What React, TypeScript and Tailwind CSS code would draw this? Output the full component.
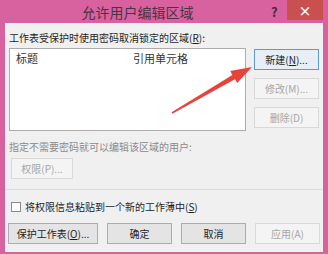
import React from 'react';

const font = "font-['Noto_Sans_CJK_SC',sans-serif]";

function Btn({ children, disabled, focused, className = '' }: { children: React.ReactNode; disabled?: boolean; focused?: boolean; className?: string }) {
  const look = disabled
    ? 'border-[#d9d9d9] bg-[#f4f4f4] text-[#a6a6a6]'
    : focused
      ? 'border-[#5b9bd5] bg-[#e8eef5] text-[#1e1e1e]'
      : 'border-[#adadad] bg-[#e4e4e4] text-[#1e1e1e]';
  return (
    <div className={`flex h-[21px] items-center justify-center border text-[10px] leading-none ${look} ${className}`}>
      {children}
    </div>
  );
}

export default function App() {
  return (
    <div className={`relative flex h-[254px] w-[328px] flex-col overflow-hidden bg-[#d8619f] ${font}`}>
      {/* Title bar */}
      <div className="relative flex h-[23px] shrink-0 items-center">
        <div className="flex-1 pl-[4px] text-center text-[14px] leading-none text-[#4a3443]">允许用户编辑区域</div>
        <div className="w-[12px] text-[13px] font-bold leading-none text-[#4a2a44]">?</div>
        <div className="ml-[4px] mr-[5px] flex h-[20px] w-[36px] items-center justify-center self-start bg-[#c9504f] text-[13px] font-bold leading-none text-white">
          ×
        </div>
      </div>

      {/* Client area */}
      <div className="mb-[2px] ml-[5px] mr-[5px] flex flex-1 flex-col bg-[#f0f0f0] text-[10px] leading-none text-[#1e1e1e]">
        <div className="ml-[4px] mt-[10px] h-[12px]">
          工作表受保护时使用密码取消锁定的区域(<span className="underline">R</span>):
        </div>

        <div className="mt-[3px] flex">
          <div className="ml-[4px] h-[83px] w-[237px] border border-[#acacac] bg-white">
            <div className="flex h-[18px] items-center">
              <span className="ml-[6px] w-[117px] text-[11px] text-[#333]">标题</span>
              <span className="text-[11px] text-[#333]">引用单元格</span>
            </div>
          </div>
          <div className="ml-[8px] flex w-[65px] flex-col gap-[8px]">
            <Btn focused className="mt-[1px]">
              新建(<span className="underline">N</span>)...
            </Btn>
            <Btn disabled>修改(M)...</Btn>
            <Btn disabled>删除(D)</Btn>
          </div>
        </div>

        <div className="ml-[4px] mt-[11px] text-[#8a8a8a]">指定不需要密码就可以编辑该区域的用户:</div>
        <Btn disabled className="ml-[6px] mt-[6px] w-[62px]">
          权限(P)...
        </Btn>

        <div className="mt-[10px] h-[2px] border-t border-[#dcdcdc] border-b-white" />

        <div className="ml-[6px] mt-[11px] flex items-center">
          <div className="h-[10px] w-[10px] border border-[#8a8a8a] bg-white" />
          <span className="ml-[4px]">
            将权限信息粘贴到一个新的工作薄中(<span className="underline">S</span>)
          </span>
        </div>

        <div className="ml-[3px] mt-[11px] flex gap-[9px]">
          <Btn className="w-[90px]">
            保护工作表(<span className="underline">O</span>)...
          </Btn>
          <Btn className="w-[65px]">确定</Btn>
          <Btn className="w-[65px]">取消</Btn>
          <Btn disabled className="w-[65px]">
            应用(A)
          </Btn>
        </div>
      </div>

      {/* Red annotation arrow */}
      <svg className="pointer-events-none absolute left-0 top-0" width="328" height="254" viewBox="0 0 328 254">
        <polygon
          points="171.6,112.3 232.4,74.9 230.2,71.1 252,67 237.2,83.1 235,79.3 172.4,113.7"
          fill="#e8433b"
        />
      </svg>
    </div>
  );
}
